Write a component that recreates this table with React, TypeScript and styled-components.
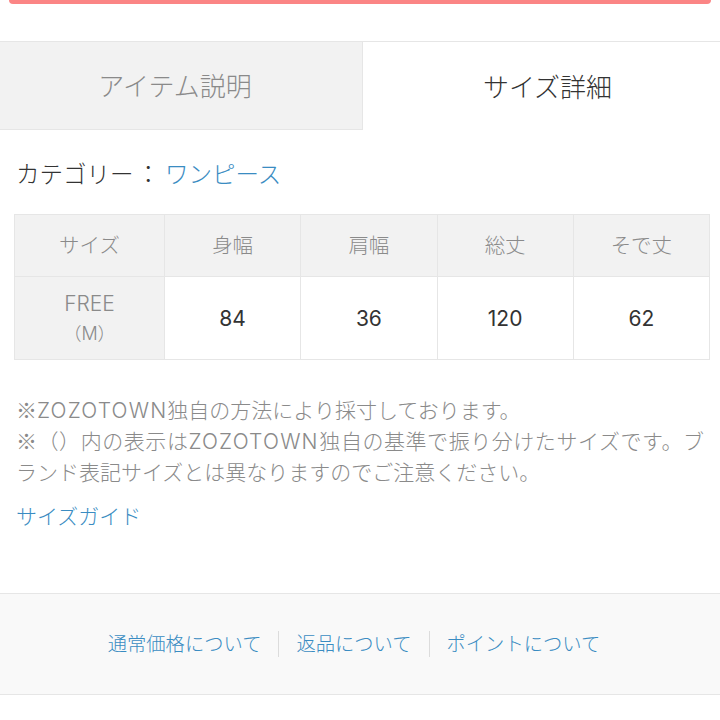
import React from "react";
import styled, { createGlobalStyle } from "styled-components";

const GlobalStyle = createGlobalStyle`
  html, body { margin: 0; padding: 0; background: #fff; }
  body {
    font-family: "Inter", "Noto Sans CJK JP", sans-serif;
    font-weight: 300;
    color: #333;
    text-spacing-trim: space-all;
    -webkit-font-smoothing: antialiased;
  }
`;

const BLUE = "#3a8cc2";
const BORDER = "#e6e6e6";

const Page = styled.div`
  width: 720px;
  min-height: 720px;
  background: #fff;
`;

const ButtonEdge = styled.div`
  height: 4px;
  margin: 0 9px;
  background: #fb8585;
  border-radius: 0 0 7px 7px;
`;

const Tabs = styled.div`
  margin-top: 37px;
  display: flex;
  border-top: 1px solid ${BORDER};
  height: 88px;
`;

const Tab = styled.div<{ $active?: boolean }>`
  flex: 0 0 ${(p) => (p.$active ? "357px" : "363px")};
  display: flex;
  align-items: center;
  justify-content: center;
  padding: ${(p) => (p.$active ? "0 0 2px 12px" : "0 12px 2px 0")};
  font-size: 26px;
  color: ${(p) => (p.$active ? "#333" : "#8a8a8a")};
  background: ${(p) => (p.$active ? "#fff" : "#f2f2f2")};
  border-right: ${(p) => (p.$active ? "none" : `1px solid ${BORDER}`)};
  border-bottom: ${(p) => (p.$active ? "none" : `1px solid ${BORDER}`)};
  box-sizing: border-box;
`;

const Category = styled.div`
  margin: 29px 0 0 16px;
  font-size: 23.5px;
  line-height: 32px;
  color: #333;
`;

const Colon = styled.span`
  margin: 0 5px 0 3px;
`;

const Link = styled.a`
  color: ${BLUE};
  text-decoration: none;
`;

const SizeTable = styled.table`
  margin: 23px 0 0 14px;
  width: 696px;
  border-collapse: collapse;
  table-layout: fixed;
`;

const Cell = styled.td<{ $head?: boolean; $gray?: boolean }>`
  border: 1px solid ${BORDER};
  text-align: center;
  vertical-align: middle;
  padding: 0;
  font-weight: ${(p) => (p.$gray ? 300 : 400)};
  height: ${(p) => (p.$head ? "61px" : "82px")};
  background: ${(p) => (p.$gray ? "#f2f2f2" : "#fff")};
  color: ${(p) => (p.$gray ? "#8a8a8a" : "#333")};
  font-size: ${(p) => (p.$head ? "20.5px" : "21px")};
  line-height: 31px;
`;

const SubLabel = styled.div`
  font-size: 18px;
  line-height: 30px;
`;

const Notes = styled.div`
  margin: 35px 16px 0 16px;
  font-size: 21px;
  line-height: 31px;
  color: #8a8a8a;
  white-space: nowrap;
`;

const NoteLine = styled.div<{ $fill?: boolean }>`
  height: 31px;
  text-align: ${(p) => (p.$fill ? "justify" : "left")};
  text-align-last: ${(p) => (p.$fill ? "justify" : "auto")};
  text-justify: inter-character;
`;

const Mark = styled.span`
  font-family: "Noto Sans CJK JP", sans-serif;
  line-height: 0;
`;

const Latin = styled.span`
  letter-spacing: 1.2px;
`;

const GuideLink = styled.a`
  display: block;
  margin: 13px 0 0 16px;
  font-size: 21px;
  line-height: 31px;
  color: ${BLUE};
  text-decoration: none;
`;

const Footer = styled.div`
  margin-top: 61px;
  height: 100px;
  padding-right: 12px;
  background: #f9f9f9;
  border-top: 1px solid ${BORDER};
  border-bottom: 1px solid ${BORDER};
  display: flex;
  align-items: center;
  justify-content: center;
`;

const FooterLink = styled.a<{ $sep?: boolean }>`
  font-size: 19.3px;
  line-height: 26px;
  color: ${BLUE};
  text-decoration: none;
  padding: 0 17px;
  border-left: ${(p) => (p.$sep ? `1px solid #dcdcdc` : "none")};
`;

const headers = ["サイズ", "身幅", "肩幅", "総丈", "そで丈"];
const values = ["84", "36", "120", "62"];

export default function App() {
  return (
    <Page>
      <GlobalStyle />
      <ButtonEdge />
      <Tabs>
        <Tab>アイテム説明</Tab>
        <Tab $active>サイズ詳細</Tab>
      </Tabs>
      <Category>
        カテゴリー<Colon>：</Colon>
        <Link href="#">ワンピース</Link>
      </Category>
      <SizeTable>
        <colgroup>
          <col style={{ width: 150 }} />
          <col />
          <col />
          <col />
          <col />
        </colgroup>
        <tbody>
          <tr>
            {headers.map((h) => (
              <Cell as="th" key={h} $head $gray>
                {h}
              </Cell>
            ))}
          </tr>
          <tr>
            <Cell $gray>
              FREE
              <SubLabel>（M）</SubLabel>
            </Cell>
            {values.map((v) => (
              <Cell key={v}>{v}</Cell>
            ))}
          </tr>
        </tbody>
      </SizeTable>
      <Notes>
        <NoteLine>
          <Mark>※</Mark>
          <Latin>ZOZOTOWN</Latin>独自の方法により採寸しております。
        </NoteLine>
        <NoteLine $fill>
          <Mark>※</Mark>（）内の表示は<Latin>ZOZOTOWN</Latin>独自の基準で振り分けたサイズです。ブ
        </NoteLine>
        <NoteLine>ランド表記サイズとは異なりますのでご注意ください。</NoteLine>
      </Notes>
      <GuideLink href="#">サイズガイド</GuideLink>
      <Footer>
        <FooterLink href="#">通常価格について</FooterLink>
        <FooterLink href="#" $sep>
          返品について
        </FooterLink>
        <FooterLink href="#" $sep>
          ポイントについて
        </FooterLink>
      </Footer>
    </Page>
  );
}
